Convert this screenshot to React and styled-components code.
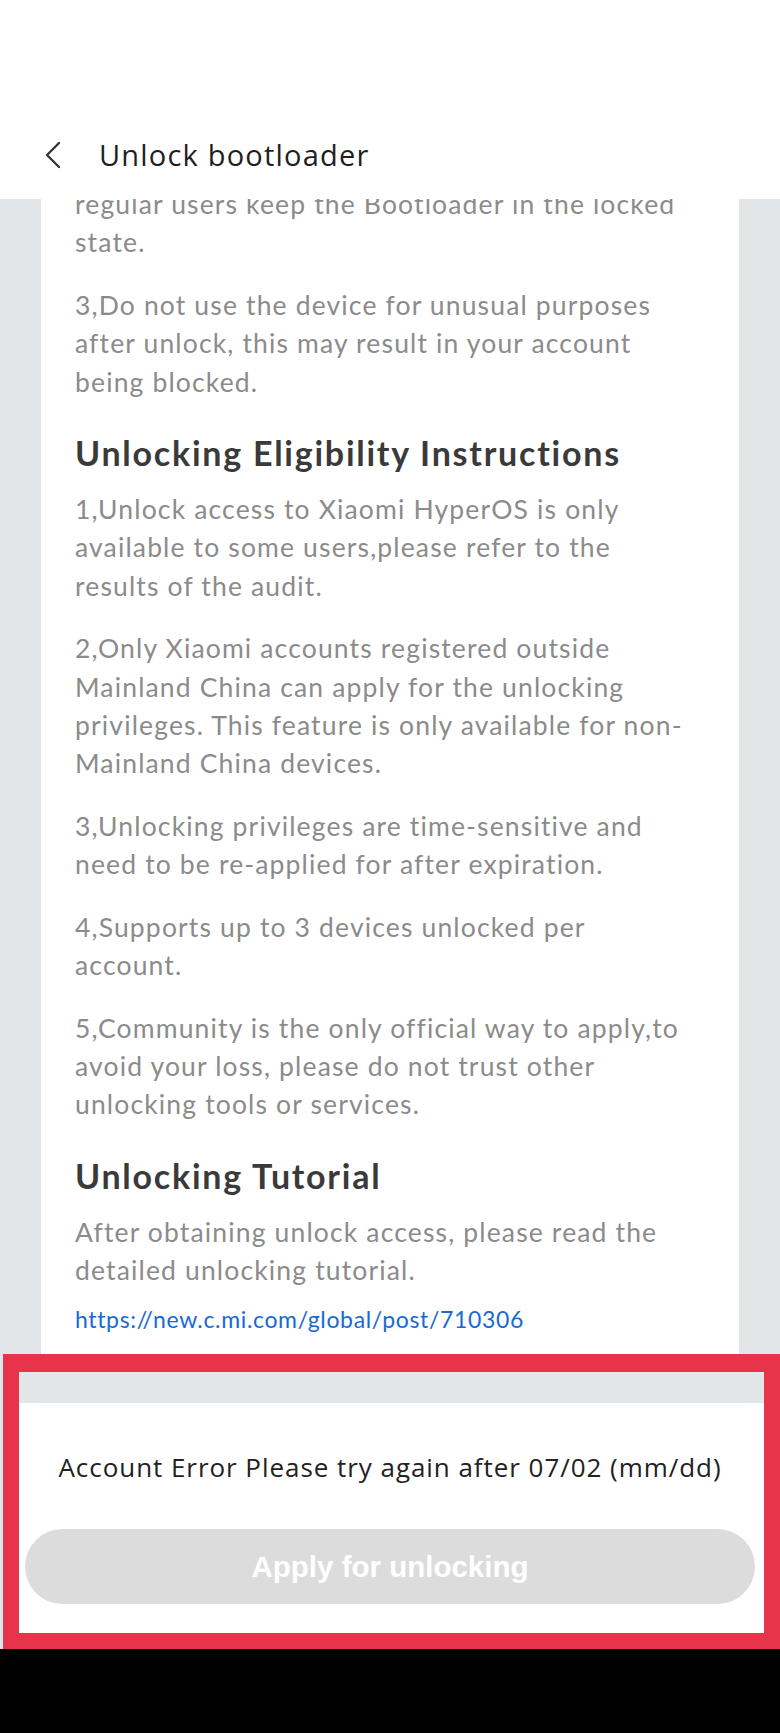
import styled, { createGlobalStyle } from "styled-components";

const GlobalStyle = createGlobalStyle`
  html, body {
    margin: 0;
    padding: 0;
    background: #000;
  }
  * {
    box-sizing: border-box;
  }
`;

const Screen = styled.div`
  width: 780px;
  height: 1733px;
  display: flex;
  flex-direction: column;
  background: #e3e6e9;
  overflow: hidden;
`;

const StatusBar = styled.div`
  height: 110px;
  background: #fff;
`;

const Header = styled.div`
  height: 89px;
  background: #fff;
  display: flex;
  align-items: center;
  padding-left: 44px;
  gap: 37px;
`;

const Title = styled.h1`
  margin: 0;
  font-family: "Open Sans", sans-serif;
  font-size: 29px;
  font-weight: 400;
  letter-spacing: 1.2px;
  color: #1f1f1f;
`;

const ScrollArea = styled.div`
  height: 1155px;
  display: flex;
  flex-direction: column;
  padding: 0 41px;
  overflow: hidden;
`;

const Card = styled.div`
  flex: 1 0 auto;
  margin-top: -14px;
  background: #fff;
  padding: 0 34px;
  display: flex;
  flex-direction: column;
`;

const Paragraph = styled.p`
  margin: 0 0 24px;
  font-family: Lato, sans-serif;
  font-size: 26.5px;
  line-height: 38.4px;
  letter-spacing: 1.15px;
  color: #8b8b8b;
  white-space: nowrap;
`;

const Heading = styled.h2`
  margin: 8px 0 17px;
  font-family: Lato, sans-serif;
  font-size: 34px;
  line-height: 40px;
  font-weight: 700;
  letter-spacing: 1.75px;
  color: #3a3a3a;
`;

const TutorialLink = styled.a`
  margin-top: -12px;
  font-family: Lato, sans-serif;
  font-size: 23px;
  line-height: 34px;
  letter-spacing: 0.65px;
  color: #1769d6;
  text-decoration: none;
`;

const BottomPanel = styled.div`
  margin-left: 3px;
  border: solid #e8344a;
  border-width: 18px 16px 16px 16px;
  background: #fff;
  display: flex;
  flex-direction: column;
`;

const Band = styled.div`
  height: 31px;
  background: #e3e6e9;
`;

const Footer = styled.div`
  height: 230px;
  padding: 47px 9px 29px 6px;
  display: flex;
  flex-direction: column;
  align-items: stretch;
`;

const Message = styled.div`
  font-family: "Open Sans", sans-serif;
  font-size: 26px;
  line-height: 34px;
  letter-spacing: 0.95px;
  color: #222;
  text-align: center;
  margin-bottom: 45px;
`;

const ApplyButton = styled.button`
  height: 75px;
  border: none;
  border-radius: 38px;
  background: #dcdcdc;
  color: #fff;
  font-family: "Liberation Sans", Arial, sans-serif;
  font-size: 29.5px;
  font-weight: 700;
  cursor: default;
`;

const NavArea = styled.div`
  flex: 1;
  background: #000;
`;

const BackIcon = () => (
  <svg width="18" height="28" viewBox="0 0 18 28" fill="none">
    <path d="M15 2 L3 14 L15 26" stroke="#333" strokeWidth="2.3" strokeLinecap="round" strokeLinejoin="round" />
  </svg>
);

const content = [
  { type: "p", lines: ["regular users keep the Bootloader in the locked", "state."] },
  {
    type: "p",
    lines: [
      "3,Do not use the device for unusual purposes",
      "after unlock, this may result in your account",
      "being blocked.",
    ],
  },
  { type: "h", text: "Unlocking Eligibility Instructions" },
  {
    type: "p",
    lines: [
      "1,Unlock access to Xiaomi HyperOS is only",
      "available to some users,please refer to the",
      "results of the audit.",
    ],
  },
  {
    type: "p",
    lines: [
      "2,Only Xiaomi accounts registered outside",
      "Mainland China can apply for the unlocking",
      "privileges. This feature is only available for non-",
      "Mainland China devices.",
    ],
  },
  {
    type: "p",
    lines: ["3,Unlocking privileges are time-sensitive and", "need to be re-applied for after expiration."],
  },
  { type: "p", lines: ["4,Supports up to 3 devices unlocked per", "account."] },
  {
    type: "p",
    lines: [
      "5,Community is the only official way to apply,to",
      "avoid your loss, please do not trust other",
      "unlocking tools or services.",
    ],
  },
  { type: "h", text: "Unlocking Tutorial" },
  { type: "p", lines: ["After obtaining unlock access, please read the", "detailed unlocking tutorial."] },
];

const App = () => {
  return (
    <>
      <GlobalStyle />
      <Screen>
        <StatusBar />
        <Header>
          <BackIcon />
          <Title>Unlock bootloader</Title>
        </Header>
        <ScrollArea>
          <Card>
            {content.map((block, i) =>
              block.type === "h" ? (
                <Heading key={i}>{block.text}</Heading>
              ) : (
                <Paragraph key={i}>
                  {block.lines.map((line, j) => (
                    <span key={j}>
                      {line}
                      {j < block.lines.length - 1 && <br />}
                    </span>
                  ))}
                </Paragraph>
              )
            )}
            <TutorialLink href="#">https://new.c.mi.com/global/post/710306</TutorialLink>
          </Card>
        </ScrollArea>
        <BottomPanel>
          <Band />
          <Footer>
            <Message>Account Error Please try again after 07/02 (mm/dd)</Message>
            <ApplyButton>Apply for unlocking</ApplyButton>
          </Footer>
        </BottomPanel>
        <NavArea />
      </Screen>
    </>
  );
};

export default App;
